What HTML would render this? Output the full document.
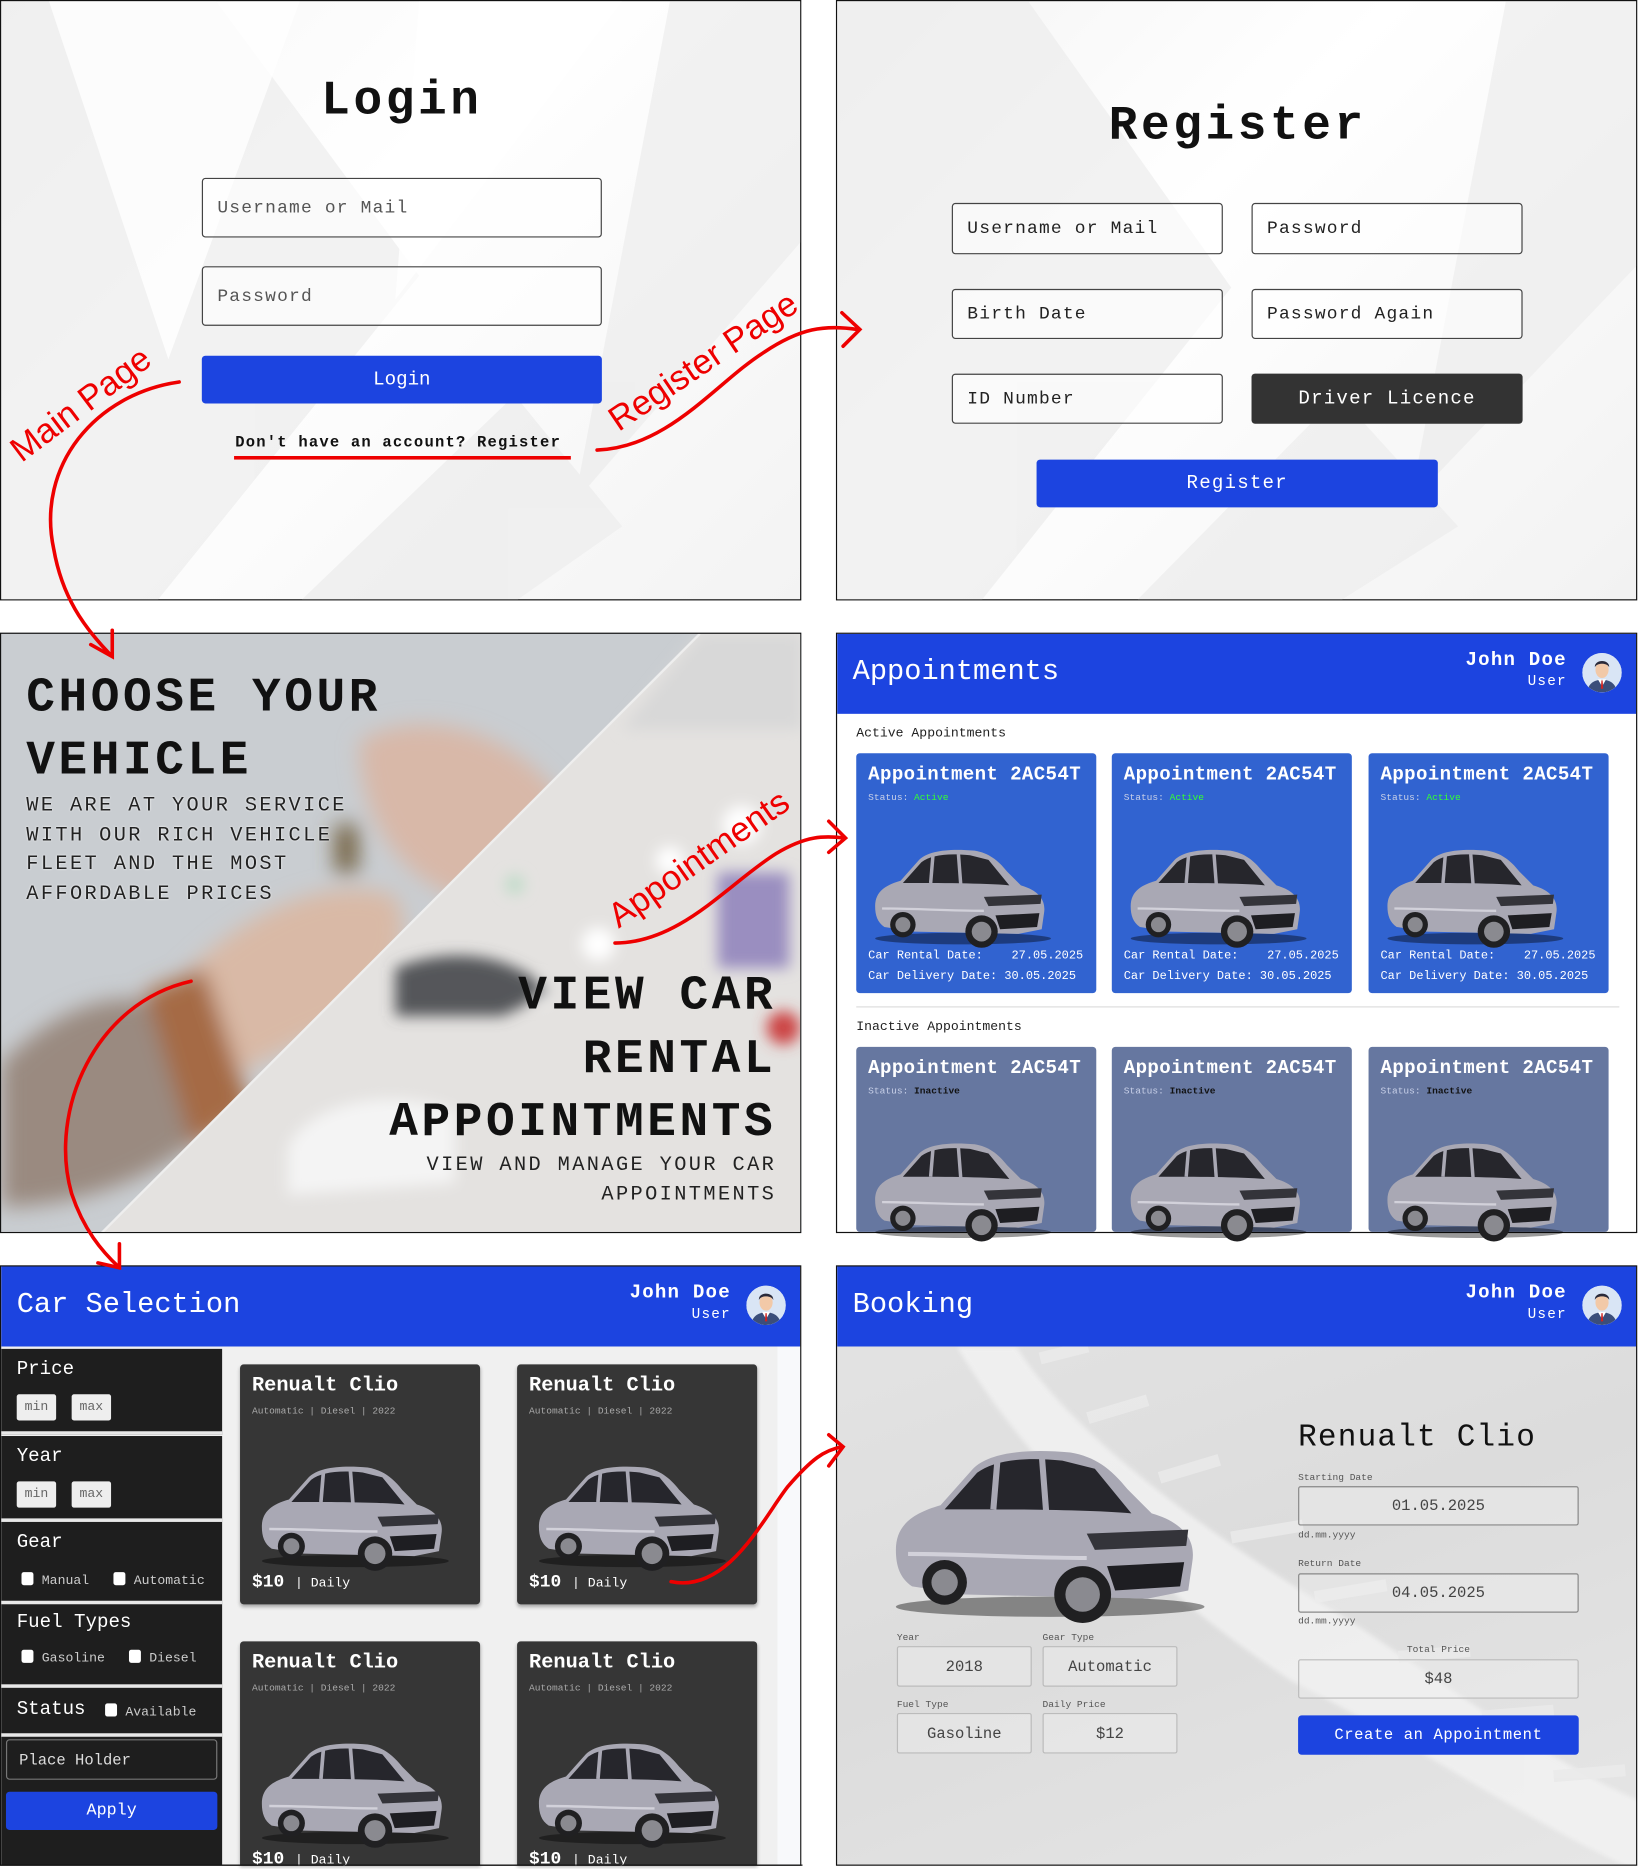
<!DOCTYPE html>
<html><head><meta charset="utf-8">
<style>
*{box-sizing:border-box;margin:0;padding:0}
html,body{width:1642px;height:1868px;overflow:hidden;background:#fff}
#w{position:absolute;left:0;top:0;width:1375px;height:1565px;transform:scale(1.1942,1.1937);transform-origin:0 0;font-family:"Liberation Mono",monospace}
.p{position:absolute;width:671px;height:503px;border:1px solid #111;overflow:hidden}
.a{position:absolute}
.inp{position:absolute;border:1px solid #444;border-radius:3px;background:rgba(255,255,255,.6);font-size:15px;color:#555;padding-left:12px;display:flex;align-items:center;letter-spacing:1px}
.btn{position:absolute;background:#1c44e0;border-radius:3px;color:#fff;display:flex;align-items:center;justify-content:center;font-size:16px}
.hd{position:absolute;left:0;top:0;width:100%;height:67px;background:#1c44e0;color:#fff}
.hd .t{position:absolute;left:13px;top:19px;font-size:24px}
.hd .n{position:absolute;right:58px;top:14px;font-size:16px;font-weight:bold;text-align:right;line-height:17px;letter-spacing:1px}
.hd .n span{font-size:12px;font-weight:normal}
.av{position:absolute;right:12px;top:16px;width:33px;height:33px;border-radius:50%;background:#dbe6f5;overflow:hidden}
.ac{position:absolute;width:201px;border-radius:3px;color:#fff}
.ac .h{position:absolute;left:10px;top:9px;font-size:16px;font-weight:bold;letter-spacing:.3px}
.ac .s{position:absolute;left:10px;top:33px;font-size:8px;color:#c8d0e8}
.ac .d{position:absolute;left:10px;font-size:10px;white-space:pre}
.ac svg,.cc svg{position:absolute}
.cc{position:absolute;width:201px;height:201px;background:#363636;border-radius:3px;color:#fff;box-shadow:0 2px 3px rgba(0,0,0,.3)}
.cc .h{position:absolute;left:10px;top:9px;font-size:17px;font-weight:bold}
.cc .s{position:absolute;left:10px;top:35px;font-size:8px;color:#aaa}
.cc .pr{position:absolute;left:10px;top:174px;font-size:15px;font-weight:bold}
.cc .pr span{font-size:11px;font-weight:normal}
.sb{position:absolute;left:0;width:185px;background:#1e1e1e;color:#fff;border-bottom:3px solid #e8e8e8}
.sb .l{position:absolute;left:13px;font-size:16px}
.mm{position:absolute;width:33px;height:22px;background:#eee;border-radius:2px;color:#666;font-size:11px;display:flex;align-items:center;justify-content:center}
.cb{position:absolute;font-size:11px;color:#ccc}
.cb:before{content:"";display:inline-block;width:10px;height:11px;background:#fff;border-radius:2px;margin-right:7px;vertical-align:-1px}
.bf{position:absolute;border:1px solid #bbb;border-radius:2px;font-size:13px;color:#444;display:flex;align-items:center;justify-content:center;background:rgba(240,240,240,.4)}
.bl{position:absolute;font-size:8px;color:#555}
</style></head><body><div id="w">
<svg width="0" height="0" style="position:absolute"><defs>
<symbol id="car" viewBox="0 0 160 100">
<ellipse cx="82" cy="90" rx="76" ry="5" fill="rgba(0,0,0,.4)"/>
<path d="M6 62 C6 50 14 44 28 40 L44 22 C52 14 70 12 92 14 C104 16 112 22 120 32 L132 44 C146 48 154 56 152 68 L150 82 L130 86 L40 84 L14 80 C8 76 6 70 6 62Z" fill="#a9a8b4"/>
<path d="M30 42 L46 24 C54 18 68 16 88 18 L104 22 L122 44 C100 42 60 42 30 42Z" fill="#26262c"/>
<path d="M56 18 L54 42 M78 17 L80 43" stroke="#a9a8b4" stroke-width="3"/>
<path d="M100 54 L150 52 L149 60 L104 62Z" fill="#34343a"/>
<path d="M110 70 L148 68 L146 80 L114 82Z" fill="#1e1e22"/>
<path d="M12 64 C40 64 70 66 100 66" stroke="#d2d1da" stroke-width="2" fill="none"/>
<circle cx="30" cy="78" r="11" fill="#202022"/><circle cx="30" cy="78" r="6.5" fill="#8a8a90"/>
<circle cx="98" cy="84" r="14" fill="#202022"/><circle cx="98" cy="84" r="8.5" fill="#8a8a90"/>
</symbol>
<symbol id="avt" viewBox="0 0 33 33">
<rect width="33" height="33" fill="#d9e5f5"/>
<path d="M4 33 C5 25 10 23 16.5 22 C23 23 28 25 29 33Z" fill="#3b4e7a"/>
<path d="M13 22 L16.5 28 L20 22Z" fill="#fff"/><path d="M16 23 L17 23 L17.5 30 L15.5 30Z" fill="#c22"/>
<ellipse cx="16.5" cy="14" rx="5.5" ry="7" fill="#f2c9a8"/>
<path d="M10.5 12 C10 5 23 5 22.5 12 C21 8 12 8 10.5 12Z" fill="#2a2a3a"/>
</symbol>
</defs></svg>

<!-- Panel 1 Login -->
<div class="p" style="left:0;top:0;background:linear-gradient(135deg,#f6f6f6,#fff 40%,#f3f3f3)">
<svg class="a" style="left:0;top:0" width="671" height="503"><g fill="#ececec" opacity=".7"><polygon points="0,0 180,0 350,230 130,503 0,503"/><polygon points="430,330 520,440 430,503 250,503"/><polygon points="560,0 671,0 671,200 480,420"/></g><g fill="#fff" opacity=".8"><polygon points="40,0 250,0 140,300"/><polygon points="350,0 520,0 330,250"/></g></svg>
<div class="a" style="left:0;width:671px;top:62px;text-align:center;font-size:40px;font-weight:bold;letter-spacing:3px;color:#111">Login</div>
<div class="inp" style="left:168px;top:148px;width:335px;height:50px">Username or Mail</div>
<div class="inp" style="left:168px;top:222px;width:335px;height:50px">Password</div>
<div class="btn" style="left:168px;top:297px;width:335px;height:40px">Login</div>
<div class="a" style="left:196px;top:362px;font-size:13px;font-weight:bold;letter-spacing:1px;color:#111">Don't have an account? Register</div>
<div class="a" style="left:195px;top:381px;width:282px;height:3px;background:#e00"></div>
</div>

<!-- Panel 2 Register -->
<div class="p" style="left:700px;top:0;background:linear-gradient(135deg,#f4f4f4,#fff 40%,#f2f2f2)">
<svg class="a" style="left:0;top:0" width="671" height="503"><g fill="#ececec" opacity=".7"><polygon points="0,0 160,0 330,240 120,503 0,503"/><polygon points="420,330 520,440 420,503 250,503"/><polygon points="560,0 671,0 671,220 480,420"/></g></svg>
<div class="a" style="left:0;width:671px;top:83px;text-align:center;font-size:40px;font-weight:bold;letter-spacing:3px;color:#111">Register</div>
<div class="inp" style="left:96px;top:169px;width:227px;height:43px;color:#222">Username or Mail</div>
<div class="inp" style="left:347px;top:169px;width:227px;height:43px;color:#222">Password</div>
<div class="inp" style="left:96px;top:241px;width:227px;height:42px;color:#222">Birth Date</div>
<div class="inp" style="left:347px;top:241px;width:227px;height:42px;color:#222">Password Again</div>
<div class="inp" style="left:96px;top:312px;width:227px;height:42px;color:#222">ID Number</div>
<div class="btn" style="left:347px;top:312px;width:227px;height:42px;background:#333;letter-spacing:1px">Driver Licence</div>
<div class="btn" style="left:167px;top:384px;width:336px;height:40px;letter-spacing:1px">Register</div>
</div>

<!-- Panel 3 Hero -->
<div class="p" style="left:0;top:530px;background:#c8ccd0">
<svg class="a" style="left:0;top:0" width="671" height="503">
<defs><filter id="bl"><feGaussianBlur stdDeviation="9"/></filter><filter id="bl2"><feGaussianBlur stdDeviation="6"/></filter></defs>
<rect width="671" height="503" fill="#c9cdd1"/>
<g filter="url(#bl)">
<path d="M300 90 C350 60 430 80 470 140 C480 190 440 230 380 220 C330 200 300 150 300 90Z" fill="#d8b8a8"/>
<path d="M140 300 C200 230 280 200 330 220 C350 260 320 310 280 330 C230 350 180 380 130 400Z" fill="#d9b9a6"/>
<path d="M0 360 C60 300 120 290 180 330 L170 420 C110 470 40 480 0 480Z" fill="#9a8a80"/>
<path d="M120 300 L170 280 L210 400 L160 430Z" fill="#a56b45"/>
<rect x="280" y="160" width="18" height="40" fill="#6d5a38"/>
</g>
<polygon points="585,0 671,0 671,503 83,503" fill="#e4e2e0"/>
<g filter="url(#bl2)">
<polygon points="585,0 671,0 671,80 520,80" fill="#d8d8d8"/>
<circle cx="620" cy="160" r="16" fill="#fff"/><circle cx="560" cy="190" r="12" fill="#fff"/><circle cx="500" cy="260" r="14" fill="#fff"/><circle cx="450" cy="300" r="10" fill="#fff"/>
<circle cx="430" cy="210" r="8" fill="#bfdcc8"/>
<rect x="600" y="200" width="60" height="80" fill="#9a8ec0"/>
<path d="M240 430 C260 390 330 380 380 400 L380 460 L240 470Z" fill="#f4f4f4"/>
<path d="M330 280 C380 260 430 270 460 300 L420 320 L330 320Z" fill="#55565a"/>
<circle cx="655" cy="330" r="14" fill="#c44"/>
</g>
<line x1="585" y1="0" x2="83" y2="503" stroke="#eee" stroke-width="2"/>
</svg>
<div class="a" style="left:21px;top:28px;font-size:40px;font-weight:bold;line-height:53px;letter-spacing:3px;color:#111">CHOOSE YOUR<br>VEHICLE</div>
<div class="a" style="left:21px;top:133px;font-size:17px;line-height:24.5px;letter-spacing:2px;color:#222;text-shadow:0 0 2px #fff">WE ARE AT YOUR SERVICE<br>WITH OUR RICH VEHICLE<br>FLEET AND THE MOST<br>AFFORDABLE PRICES</div>
<div class="a" style="right:20px;top:278px;font-size:40px;font-weight:bold;line-height:53px;letter-spacing:3px;color:#111;text-align:right">VIEW CAR<br>RENTAL<br>APPOINTMENTS</div>
<div class="a" style="right:20px;top:434px;font-size:17px;line-height:24.5px;letter-spacing:2px;color:#222;text-align:right">VIEW AND MANAGE YOUR CAR<br>APPOINTMENTS</div>
</div>

<!-- Panel 4 Appointments -->
<div class="p" style="left:700px;top:530px;background:#fff">
<div class="hd"><div class="t">Appointments</div><div class="n">John Doe<br><span>User</span></div><div class="av"><svg width="33" height="33"><use href="#avt"/></svg></div></div>
<div class="a" style="left:16px;top:78px;font-size:11px;color:#222">Active Appointments</div>
<div class="a" style="left:16px;top:312px;width:639px;height:1px;background:#ddd"></div>
<div class="a" style="left:16px;top:324px;font-size:11px;color:#222">Inactive Appointments</div>
</div>

<!-- Panel 5 Car Selection -->
<div class="p" style="left:0;top:1060px;background:#f0f0f0">
<div class="a" style="left:650px;top:67px;width:21px;height:440px;background:#f8f9fb"></div>
<div class="hd"><div class="t">Car Selection</div><div class="n">John Doe<br><span>User</span></div><div class="av"><svg width="33" height="33"><use href="#avt"/></svg></div></div>
<div class="sb" style="top:69px;height:72px"><div class="l" style="top:8px">Price</div><div class="mm" style="left:13px;top:38px">min</div><div class="mm" style="left:59px;top:38px">max</div></div>
<div class="sb" style="top:142px;height:72px"><div class="l" style="top:8px">Year</div><div class="mm" style="left:13px;top:38px">min</div><div class="mm" style="left:59px;top:38px">max</div></div>
<div class="sb" style="top:214px;height:69px"><div class="l" style="top:8px">Gear</div><div class="cb" style="left:17px;top:42px">Manual</div><div class="cb" style="left:94px;top:42px">Automatic</div></div>
<div class="sb" style="top:283px;height:70px"><div class="l" style="top:6px">Fuel Types</div><div class="cb" style="left:17px;top:38px">Gasoline</div><div class="cb" style="left:107px;top:38px">Diesel</div></div>
<div class="sb" style="top:353px;height:41px"><div class="l" style="top:9px">Status</div><div class="cb" style="left:87px;top:13px">Available</div></div>
<div class="sb" style="top:394px;height:112px;border:none"><div class="a" style="left:4px;top:2px;width:177px;height:34px;border:1px solid #777;border-radius:3px;color:#ddd;font-size:13px;padding:9px 0 0 10px">Place Holder</div><div class="btn" style="left:4px;top:46px;width:177px;height:32px;font-size:14px">Apply</div></div>
</div>

<!-- Panel 6 Booking -->
<div class="p" style="left:700px;top:1060px;background:linear-gradient(160deg,#e4e4e4,#dcdcdc 50%,#e6e6e6)">
<svg class="a" style="left:0;top:67px" width="671" height="440">
<defs><filter id="b3"><feGaussianBlur stdDeviation="2"/></filter></defs>
<g fill="#f3f3f3" opacity=".8" filter="url(#b3)">
<path d="M150 0 C200 80 330 170 430 230 C520 290 600 350 671 380 L671 440 C580 400 480 330 380 280 C260 200 160 100 100 0Z"/>
</g>
<g stroke="#eaeaea" stroke-width="10" opacity=".9">
<line x1="170" y1="10" x2="210" y2="0"/><line x1="210" y1="60" x2="260" y2="45"/><line x1="270" y1="110" x2="320" y2="95"/><line x1="330" y1="160" x2="390" y2="150"/><line x1="400" y1="210" x2="460" y2="200"/><line x1="470" y1="260" x2="530" y2="255"/><line x1="540" y1="310" x2="600" y2="305"/><line x1="600" y1="360" x2="660" y2="355"/>
</g></svg>
<div class="hd"><div class="t">Booking</div><div class="n">John Doe<br><span>User</span></div><div class="av"><svg width="33" height="33"><use href="#avt"/></svg></div></div>
<svg class="a" style="left:30px;top:132px" width="290" height="170"><use href="#car"/></svg>
<div class="a" style="left:386px;top:128px;font-size:26px;color:#111;letter-spacing:1px">Renualt Clio</div>
<div class="bl" style="left:386px;top:173px">Starting Date</div>
<div class="bf" style="left:386px;top:184px;width:235px;height:33px;border-color:#888">01.05.2025</div>
<div class="bl" style="left:386px;top:221px">dd.mm.yyyy</div>
<div class="bl" style="left:386px;top:245px">Return Date</div>
<div class="bf" style="left:386px;top:257px;width:235px;height:33px;border-color:#888">04.05.2025</div>
<div class="bl" style="left:386px;top:293px">dd.mm.yyyy</div>
<div class="bl" style="left:386px;top:317px;width:235px;text-align:center">Total Price</div>
<div class="bf" style="left:386px;top:329px;width:235px;height:33px">$48</div>
<div class="btn" style="left:386px;top:376px;width:235px;height:33px;font-size:13px;letter-spacing:.5px">Create an Appointment</div>
<div class="bl" style="left:50px;top:307px">Year</div><div class="bl" style="left:172px;top:307px">Gear Type</div>
<div class="bf" style="left:50px;top:318px;width:113px;height:34px">2018</div><div class="bf" style="left:172px;top:318px;width:113px;height:34px">Automatic</div>
<div class="bl" style="left:50px;top:363px">Fuel Type</div><div class="bl" style="left:172px;top:363px">Daily Price</div>
<div class="bf" style="left:50px;top:374px;width:113px;height:34px">Gasoline</div><div class="bf" style="left:172px;top:374px;width:113px;height:34px">$12</div>
</div>

<!-- appointment cards -->
<div class="ac" style="left:717px;top:631px;height:201px;background:#3163d0"><div class="h">Appointment 2AC54T</div><div class="s">Status: <b style="color:#3f3;font-weight:normal">Active</b></div><svg style="left:10px;top:68px" width="155" height="97"><use href="#car"/></svg><div class="d" style="top:165px">Car Rental Date:    27.05.2025</div><div class="d" style="top:182px">Car Delivery Date: 30.05.2025</div></div>
<div class="ac" style="left:931px;top:631px;height:201px;background:#3163d0"><div class="h">Appointment 2AC54T</div><div class="s">Status: <b style="color:#3f3;font-weight:normal">Active</b></div><svg style="left:10px;top:68px" width="155" height="97"><use href="#car"/></svg><div class="d" style="top:165px">Car Rental Date:    27.05.2025</div><div class="d" style="top:182px">Car Delivery Date: 30.05.2025</div></div>
<div class="ac" style="left:1146px;top:631px;height:201px;background:#3163d0"><div class="h">Appointment 2AC54T</div><div class="s">Status: <b style="color:#3f3;font-weight:normal">Active</b></div><svg style="left:10px;top:68px" width="155" height="97"><use href="#car"/></svg><div class="d" style="top:165px">Car Rental Date:    27.05.2025</div><div class="d" style="top:182px">Car Delivery Date: 30.05.2025</div></div>
<div class="ac" style="left:717px;top:877px;height:155px;background:#6677a0"><div class="h">Appointment 2AC54T</div><div class="s">Status: <b style="color:#111">Inactive</b></div><svg style="left:10px;top:68px" width="155" height="97"><use href="#car"/></svg></div>
<div class="ac" style="left:931px;top:877px;height:155px;background:#6677a0"><div class="h">Appointment 2AC54T</div><div class="s">Status: <b style="color:#111">Inactive</b></div><svg style="left:10px;top:68px" width="155" height="97"><use href="#car"/></svg></div>
<div class="ac" style="left:1146px;top:877px;height:155px;background:#6677a0"><div class="h">Appointment 2AC54T</div><div class="s">Status: <b style="color:#111">Inactive</b></div><svg style="left:10px;top:68px" width="155" height="97"><use href="#car"/></svg></div>

<!-- car cards -->
<div class="cc" style="left:201px;top:1143px"><div class="h">Renualt Clio</div><div class="s">Automatic | Diesel | 2022</div><svg style="left:12px;top:72px" width="165" height="103"><use href="#car"/></svg><div class="pr">$10 <span>| Daily</span></div></div>
<div class="cc" style="left:433px;top:1143px"><div class="h">Renualt Clio</div><div class="s">Automatic | Diesel | 2022</div><svg style="left:12px;top:72px" width="165" height="103"><use href="#car"/></svg><div class="pr">$10 <span>| Daily</span></div></div>
<div class="cc" style="left:201px;top:1375px;height:187px;border-radius:3px 3px 0 0"><div class="h">Renualt Clio</div><div class="s">Automatic | Diesel | 2022</div><svg style="left:12px;top:72px" width="165" height="103"><use href="#car"/></svg><div class="pr">$10 <span>| Daily</span></div></div>
<div class="cc" style="left:433px;top:1375px;height:187px;border-radius:3px 3px 0 0"><div class="h">Renualt Clio</div><div class="s">Automatic | Diesel | 2022</div><svg style="left:12px;top:72px" width="165" height="103"><use href="#car"/></svg><div class="pr">$10 <span>| Daily</span></div></div>
<div class="a" style="left:0;top:1562px;width:672px;height:1px;background:#111"></div>

<!-- red annotations -->
<svg class="a" style="left:0;top:0" width="1375" height="1565">
<g fill="none" stroke="#e00" stroke-width="3" stroke-linecap="round">
<path d="M150 320 C80 330 30 390 45 460 C52 500 70 525 92 548"/>
<path d="M76 540 L94 550 L94 528"/>
<path d="M500 377 C560 375 600 320 640 295 C670 275 690 272 718 276"/>
<path d="M705 262 L720 276 L706 290"/>
<path d="M515 790 C570 790 610 740 650 715 C675 700 690 700 707 702"/>
<path d="M694 688 L708 702 L694 714"/>
<path d="M160 822 C80 840 40 930 60 1000 C70 1030 85 1048 100 1062"/>
<path d="M82 1058 L100 1062 L100 1042"/>
<path d="M562 1325 C610 1335 640 1270 660 1245 C680 1222 690 1215 705 1212"/>
<path d="M694 1202 L706 1212 L694 1228"/>
</g>
<g fill="#e00" font-family="Liberation Sans,sans-serif" font-size="29">
<text transform="translate(18,388) rotate(-37)">Main Page</text>
<text transform="translate(518,362) rotate(-34)">Register Page</text>
<text transform="translate(518,778) rotate(-35)">Appointments</text>
</g></svg>
</div></body></html>
